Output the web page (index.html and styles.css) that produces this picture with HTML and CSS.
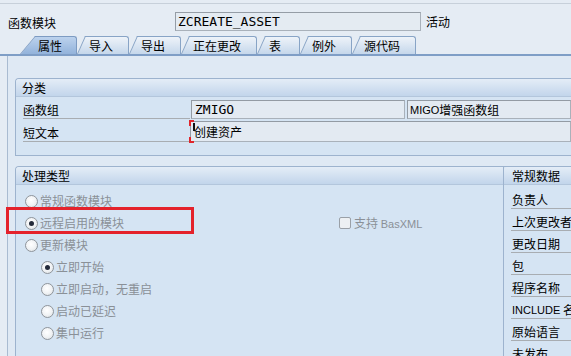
FILE: index.html
```html
<!DOCTYPE html>
<html lang="zh">
<head>
<meta charset="utf-8">
<link rel="stylesheet" href="styles.css">
</head>
<body>
<div class="toprule"></div>
<div class="fm-row">
  <span class="fm-label">函数模块</span>
  <div class="fm-input">ZCREATE_ASSET</div>
  <span class="fm-status">活动</span>
</div>
<div class="tabs">
  <div class="tab active"><span>属性</span></div>
  <div class="tab"><span>导入</span></div>
  <div class="tab"><span>导出</span></div>
  <div class="tab"><span>正在更改</span></div>
  <div class="tab tab-wide"><span>表</span></div>
  <div class="tab"><span>例外</span></div>
  <div class="tab"><span>源代码</span></div>
</div>
<div class="tabline"></div>
<div class="tabbody">
  <div class="panel">
    <div class="group g1">
      <div class="ghead">分类</div>
      <div class="gbody">
        <div class="frow r1">
          <span class="flabel">函数组</span>
          <div class="inp w1 mono">ZMIGO</div>
          <div class="inp w2"><span class="lat">MIGO</span>增强函数组</div>
        </div>
        <div class="frow r2">
          <span class="flabel">短文本</span>
          <div class="inp w3 edit"><span class="caret"></span>创建资产</div>
        </div>
      </div>
    </div>
    <div class="group g2">
      <div class="col-left">
        <div class="ghead">处理类型</div>
        <div class="radios">
          <div class="radio"><span class="rb"></span><span>常规函数模块</span></div>
          <div class="radio">
            <div class="radio-main"><span class="rb on"></span><span>远程启用的模块</span></div>
            <span class="cb"></span><span>支持 <span class="lat">BasXML</span></span>
          </div>
          <div class="radio"><span class="rb"></span><span>更新模块</span></div>
          <div class="radio sub"><span class="rb on"></span><span>立即开始</span></div>
          <div class="radio sub"><span class="rb"></span><span>立即启动，无重启</span></div>
          <div class="radio sub"><span class="rb"></span><span>启动已延迟</span></div>
          <div class="radio sub"><span class="rb"></span><span>集中运行</span></div>
        </div>
      </div>
      <div class="col-right">
        <div class="ghead">常规数据</div>
        <div class="rrows">
          <div class="rrow">负责人</div>
          <div class="rrow">上次更改者</div>
          <div class="rrow">更改日期</div>
          <div class="rrow">包</div>
          <div class="rrow">程序名称</div>
          <div class="rrow"><span class="lat">INCLUDE</span>&nbsp;名称</div>
          <div class="rrow">原始语言</div>
          <div class="rrow">未发布</div>
        </div>
      </div>
    </div>
  </div>
</div>
<div class="annot"></div>
</body>
</html>
```

FILE: styles.css
```css
html, body {
  margin: 0;
  padding: 0;
}
body {
  width: 571px;
  height: 356px;
  overflow: hidden;
  position: relative;
  background: #e5ecf4;
  font-family: "Noto Sans CJK SC", sans-serif;
  font-size: 12px;
  line-height: 14px;
  color: #000;
}
.lat {
  font-family: "Liberation Sans", sans-serif;
  font-size: 11px;
}
.mono {
  font-family: "DejaVu Sans Mono", monospace;
  font-size: 13px;
}
.toprule {
  height: 1px;
  margin-top: 3px;
  background: #c7d0da;
}
.fm-row {
  display: flex;
  align-items: center;
  margin-top: 8px;
  height: 19px;
  padding-left: 8px;
}
.fm-label {
  width: 167px;
  padding-top: 2px;
}
.fm-input {
  width: 246px;
  height: 19px;
  box-sizing: border-box;
  border: 1px solid #a9b1ba;
  border-top-color: #959da6;
  border-left-color: #959da6;
  background: #e4ebf2;
  font-family: "DejaVu Sans Mono", monospace;
  font-size: 13px;
  line-height: 17px;
  padding-left: 2px;
  white-space: nowrap;
}
.fm-status {
  margin-left: 5px;
  padding-top: 1px;
}

/* tabs */
.tabs {
  display: flex;
  margin-top: 5px;
  padding-left: 20px;
  height: 18px;
}
.tab {
  position: relative;
  height: 18px;
  padding: 0 16px 0 12px;
  line-height: 19px;
}
.tab span {
  position: relative;
  z-index: 1;
}
.tab::before {
  content: "";
  position: absolute;
  top: 0;
  bottom: 0;
  left: 8px;
  right: 0;
  background: linear-gradient(#eef3f9, #c5d7eb);
  border: 1px solid #88a4c6;
  border-left: 0;
  border-bottom: 0;
  border-radius: 0 3px 0 0;
}
.tab::after {
  content: "";
  position: absolute;
  top: 0;
  bottom: 0;
  left: 0;
  width: 10px;
  background: linear-gradient(#eef3f9, #c5d7eb);
  border-left: 1px solid #88a4c6;
  border-top: 1px solid #88a4c6;
  transform-origin: 0 100%;
  transform: skewX(-24deg);
}
.tab-wide {
  padding-right: 19px;
}
.tab.active {
  padding: 0 15px 0 18px;
}
.tab.active::before {
  left: 15px;
  background: linear-gradient(#bcd2ed, #93b3db);
  border-color: #7d9bc2;
}
.tab.active::after {
  width: 17px;
  transform: skewX(-40deg);
  background: linear-gradient(#bcd2ed, #93b3db);
  border-color: #7d9bc2;
}
.tabline {
  height: 2px;
  background: #7f9ec6;
}

/* body */
.tabbody {
  margin-left: 7px;
  border-left: 1px solid #a9bbd1;
  background: #dfe9f4;
  height: 300px;
}
.panel {
  padding: 22px 0 0 7px;
}
.group {
  border: 1px solid #9db3ce;
  border-right: 0;
  border-top-left-radius: 4px;
  background: #d5e4f3;
}
.ghead {
  height: 17px;
  line-height: 18px;
  padding-left: 6px;
  background: linear-gradient(#e4edf7, #c2d5eb);
  border-bottom: 1px solid #b3c6dc;
  border-top-left-radius: 3px;
  white-space: nowrap;
}
.gbody {
  padding: 3px 0 13px 0;
}
.frow {
  display: flex;
}
.frow.r1 {
  height: 19px;
  margin-bottom: 2px;
}
.frow.r2 {
  height: 21px;
}
.flabel {
  width: 167px;
  margin-left: 7px;
  box-sizing: border-box;
  border-bottom: 1px solid #a8adb2;
  display: flex;
  align-items: flex-end;
  padding-bottom: 1px;
}
.inp {
  box-sizing: border-box;
  border: 1px solid #a9b1ba;
  border-top-color: #939ba4;
  border-left-color: #939ba4;
  background: #e3eaf2;
  white-space: nowrap;
  display: flex;
  align-items: center;
}
.w1 {
  width: 214px;
  margin-left: 1px;
  padding-left: 3px;
}
.w2 {
  flex: 1;
  margin-left: 2px;
  padding-left: 2px;
}
.w3 {
  flex: 1;
  padding-left: 2px;
  position: relative;
}
.edit::before,
.edit::after {
  content: "";
  position: absolute;
  left: -2px;
  width: 3px;
  height: 4px;
  border-left: 2px solid #e0262c;
}
.edit::before {
  top: -2px;
  border-top: 2px solid #e0262c;
}
.edit::after {
  bottom: -2px;
  border-bottom: 2px solid #e0262c;
}
.caret {
  display: inline-block;
  width: 2px;
  height: 8px;
  background: #111;
  align-self: flex-start;
  margin-top: 1px;
  margin-right: -1px;
}

.g2 {
  margin-top: 10px;
  display: flex;
  height: 200px;
}
.col-left {
  width: 487px;
  flex: none;
}
.col-right {
  flex: 1;
  border-left: 1px solid #9db3ce;
}
.col-right .ghead {
  padding-left: 8px;
}
.radios {
  padding: 5px 0 0 9px;
  color: #8a9097;
}
.radio {
  display: flex;
  align-items: center;
  height: 22px;
  gap: 2px;
}
.radio.sub {
  padding-left: 16px;
}
.radio-main {
  display: flex;
  align-items: center;
  gap: 2px;
  width: 312px;
}
.rb {
  width: 13px;
  height: 13px;
  box-sizing: border-box;
  border: 1px solid #8f959b;
  border-radius: 50%;
  background: radial-gradient(circle at 45% 40%, #ffffff 0%, #f1f3f5 50%, #d9dde1 100%);
  position: relative;
  flex: none;
}
.rb.on::after {
  content: "";
  position: absolute;
  left: 3px;
  top: 3px;
  width: 5px;
  height: 5px;
  border-radius: 50%;
  background: #232a3a;
}
.cb {
  width: 12px;
  height: 12px;
  box-sizing: border-box;
  border: 1px solid #9aa0a7;
  border-radius: 2px;
  background: #edf0f3;
  margin-right: 1px;
}
.rrows {
  padding-top: 2px;
}
.rrow {
  height: 22px;
  box-sizing: border-box;
  margin-left: 7px;
  padding: 0 0 1px 1px;
  border-bottom: 1px solid #a8adb2;
  display: flex;
  align-items: flex-end;
  white-space: nowrap;
}

.annot {
  position: absolute;
  left: 6px;
  top: 207px;
  width: 188px;
  height: 27px;
  box-sizing: border-box;
  border: 3px solid #e4222b;
}
```
